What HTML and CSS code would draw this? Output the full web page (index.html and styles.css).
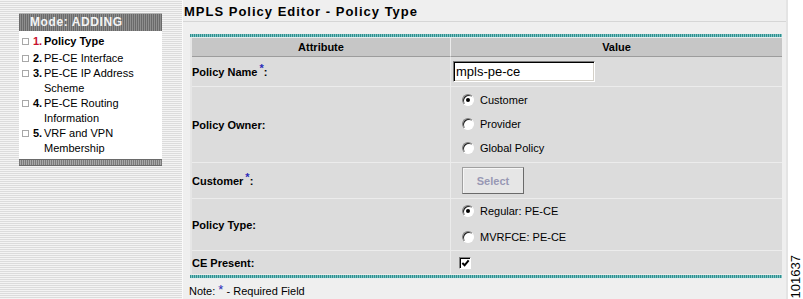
FILE: index.html
```html
<!DOCTYPE html>
<html lang="en">
<head>
  <meta charset="UTF-8" />
  <title>MPLS Policy Editor - Policy Type</title>
  <link rel="stylesheet" href="styles.css">
</head>
<body>

  <aside class="sidebar">
    <div class="wizard">
      <div class="wizard-head">Mode: ADDING</div>
      <ul class="steps">
        <li class="step current"><span class="box"></span><b class="num">1.</b><span>Policy Type</span></li>
        <li class="step"><span class="box"></span><b class="num">2.</b><span>PE-CE Interface</span></li>
        <li class="step"><span class="box"></span><b class="num">3.</b><span>PE-CE IP Address Scheme</span></li>
        <li class="step"><span class="box"></span><b class="num">4.</b><span>PE-CE Routing Information</span></li>
        <li class="step"><span class="box"></span><b class="num">5.</b><span>VRF and VPN Membership</span></li>
      </ul>
      <div class="wizard-foot"></div>
    </div>
  </aside>

  <main class="content">
    <h1 class="page-title">MPLS Policy Editor - Policy Type</h1>

    <div class="form-wrap">
      <div class="rule"></div>
      <table class="attr-table">
        <colgroup>
          <col class="col-attr">
          <col class="col-value">
        </colgroup>
        <tr>
          <th>Attribute</th>
          <th>Value</th>
        </tr>
        <tr class="row-name">
          <td class="label">Policy Name<sup class="req">*</sup>:</td>
          <td class="value"><input class="text-field" type="text" value="mpls-pe-ce" /></td>
        </tr>
        <tr class="row-owner">
          <td class="label">Policy Owner:</td>
          <td class="value">
            <ul class="radio-list">
              <li><span class="radio checked"></span>Customer</li>
              <li><span class="radio"></span>Provider</li>
              <li><span class="radio"></span>Global Policy</li>
            </ul>
          </td>
        </tr>
        <tr class="row-customer">
          <td class="label">Customer<sup class="req">*</sup>:</td>
          <td class="value"><button class="btn" disabled>Select</button></td>
        </tr>
        <tr class="row-type">
          <td class="label">Policy Type:</td>
          <td class="value">
            <ul class="radio-list wide">
              <li><span class="radio checked"></span>Regular: PE-CE</li>
              <li><span class="radio"></span>MVRFCE: PE-CE</li>
            </ul>
          </td>
        </tr>
        <tr class="row-ce">
          <td class="label">CE Present:</td>
          <td class="value">
            <span class="checkbox">
              <svg width="10" height="10" viewBox="0 0 10 10"><path d="M1.5 4.5 L4 7 L8.5 1.5" fill="none" stroke="#000" stroke-width="2.2"/></svg>
            </span>
          </td>
        </tr>
      </table>
      <div class="rule"></div>
      <p class="note">Note: <span class="req-note">*</span> - Required Field</p>
    </div>
  </main>

  <div class="figure-id"><span>101637</span></div>

</body>
</html>
```

FILE: styles.css
```css
body {
  margin: 0;
  height: 299px;
  display: flex;
  overflow: hidden;
  background: #fff;
  color: #000;
  font-family: "Liberation Sans", Arial, sans-serif;
  font-size: 11px;
}

/* left wizard column */
.sidebar {
  width: 183px;
  flex: none;
  box-sizing: border-box;
  padding: 14px 0 0 19px;
  background: repeating-linear-gradient(#f4f4f4 0 1px, #dcdcdc 1px 2px);
  border-right: 1px solid #fafafa;
}

.wizard {
  width: 143px;
  background: #fff;
}

.wizard-head {
  height: 17px;
  line-height: 17px;
  padding-left: 11px;
  color: #f4f4f4;
  font-size: 12px;
  font-weight: bold;
  letter-spacing: 0.6px;
  background: repeating-linear-gradient(90deg, #6a6a6a 0 1px, #8e8e8e 1px 2px);
  border-top: 1px solid #b0b0b0;
  margin-top: -1px;
}

.steps {
  list-style: none;
  margin: 0;
  padding: 3px 0 1px 3px;
  line-height: 15px;
}

.step {
  display: grid;
  grid-template-columns: 11px 11px 1fr;
}

.step.current {
  margin-bottom: 2px;
  font-weight: bold;
}

.step.current .num {
  color: #c8102e;
}

.box {
  width: 5px;
  height: 5px;
  margin-top: 4px;
  border: 1px solid #a8a8a8;
}

.wizard-foot {
  height: 5px;
  margin-top: 2px;
  border: 1px solid #6a6a6a;
  border-width: 1px 0;
  background: repeating-linear-gradient(90deg, #7a7a7a 0 1px, #a8a8a8 1px 2px);
}

/* main area */
.content {
  flex: 1;
  background: #efefef;
}

.page-title {
  margin: 0;
  height: 17px;
  padding: 4px 0 0 1px;
  line-height: 16px;
  font-size: 13px;
  font-weight: bold;
  letter-spacing: 1px;
  border-bottom: 1px solid #d6d6d6;
}

.form-wrap {
  width: 592px;
  margin: 12px 0 0 7px;
}

.rule {
  height: 3px;
  background: repeating-linear-gradient(90deg, #2f8f8f 0 1px, #7fc4c4 1px 2px);
  border-bottom: 1px solid #e4eeee;
}

.attr-table {
  width: 592px;
  table-layout: fixed;
  border-collapse: separate;
  border-spacing: 0;
  border-left: 2px solid #e6e6e6;
  background: #dcdcdc;
}

.col-attr {
  width: 259px;
}

.attr-table th {
  height: 18px;
  padding: 0;
  background: #c6c6c6;
  border-bottom: 1px solid #9c9c9c;
  font-weight: bold;
  text-align: center;
}

.attr-table th:first-child,
.attr-table td:first-child {
  border-right: 1px solid #ebebeb;
}

.attr-table td {
  padding: 0;
  vertical-align: middle;
  border-bottom: 1px solid #ececec;
}

.label {
  font-weight: bold;
}

.value {
  padding-left: 2px !important;
}

.row-name td { height: 29px; }
.row-owner td { height: 75px; }
.row-customer td { height: 35px; }
.row-type td { height: 51px; }
.row-ce td { height: 23px; }

.req {
  color: #2a2ab8;
  font-size: 11px;
  margin-left: 2px;
  vertical-align: 4px;
  line-height: 0;
}

.text-field {
  width: 142px;
  height: 21px;
  box-sizing: border-box;
  margin: 0;
  padding: 0 2px;
  font-family: "Liberation Sans", Arial, sans-serif;
  font-size: 13px;
  background: #fff;
  border: 1px solid;
  border-color: #7a7a7a #fff #fff #7a7a7a;
  box-shadow: inset 1px 1px #000, inset -1px -1px #d4d0c8;
}

.radio-list {
  list-style: none;
  margin: -1px 0 0;
  padding: 0 0 0 9px;
  line-height: 24px;
}

.radio-list.wide {
  line-height: 26px;
}

.radio-list li {
  display: flex;
  align-items: center;
}

.radio {
  width: 10px;
  height: 10px;
  margin-right: 6px;
  border-radius: 50%;
  background: #fff;
  border: 1px solid;
  border-color: #808080 #fff #fff #808080;
  box-shadow: inset 1px 1px #222;
  position: relative;
}

.radio.checked::after {
  content: "";
  position: absolute;
  left: 3px;
  top: 3px;
  width: 4px;
  height: 4px;
  border-radius: 50%;
  background: #000;
}

.btn {
  width: 62px;
  height: 27px;
  margin-left: 9px;
  padding: 0;
  font-family: "Liberation Sans", Arial, sans-serif;
  font-size: 11px;
  font-weight: bold;
  color: #9898b4;
  background: #e6e6e6;
  border: 1px solid;
  border-color: #a0a0a0 #6a6a6a #6a6a6a #a0a0a0;
  box-shadow: inset 1px 1px #f6f6f6;
}

.checkbox {
  display: block;
  width: 10px;
  height: 10px;
  margin-left: 6px;
  background: #fff;
  border: 1px solid;
  border-color: #808080 #fff #fff #808080;
  box-shadow: inset 1px 1px #000;
}

.checkbox svg {
  display: block;
  margin: 1px 0 0 1px;
  width: 9px;
  height: 9px;
}

.note {
  margin: 5px 0 0 -1px;
  line-height: 14px;
}

.req-note {
  color: #2a2ab8;
  font-size: 13px;
  position: relative;
  top: -1px;
}

/* figure number at the right edge */
.figure-id {
  width: 17px;
  flex: none;
  display: flex;
  align-items: flex-end;
  justify-content: center;
  padding-bottom: 1px;
  border-left: 2px solid #e4e4e4;
  box-sizing: border-box;
}

.figure-id span {
  writing-mode: vertical-rl;
  transform: rotate(180deg);
  font-size: 13px;
  line-height: 14px;
}
```
